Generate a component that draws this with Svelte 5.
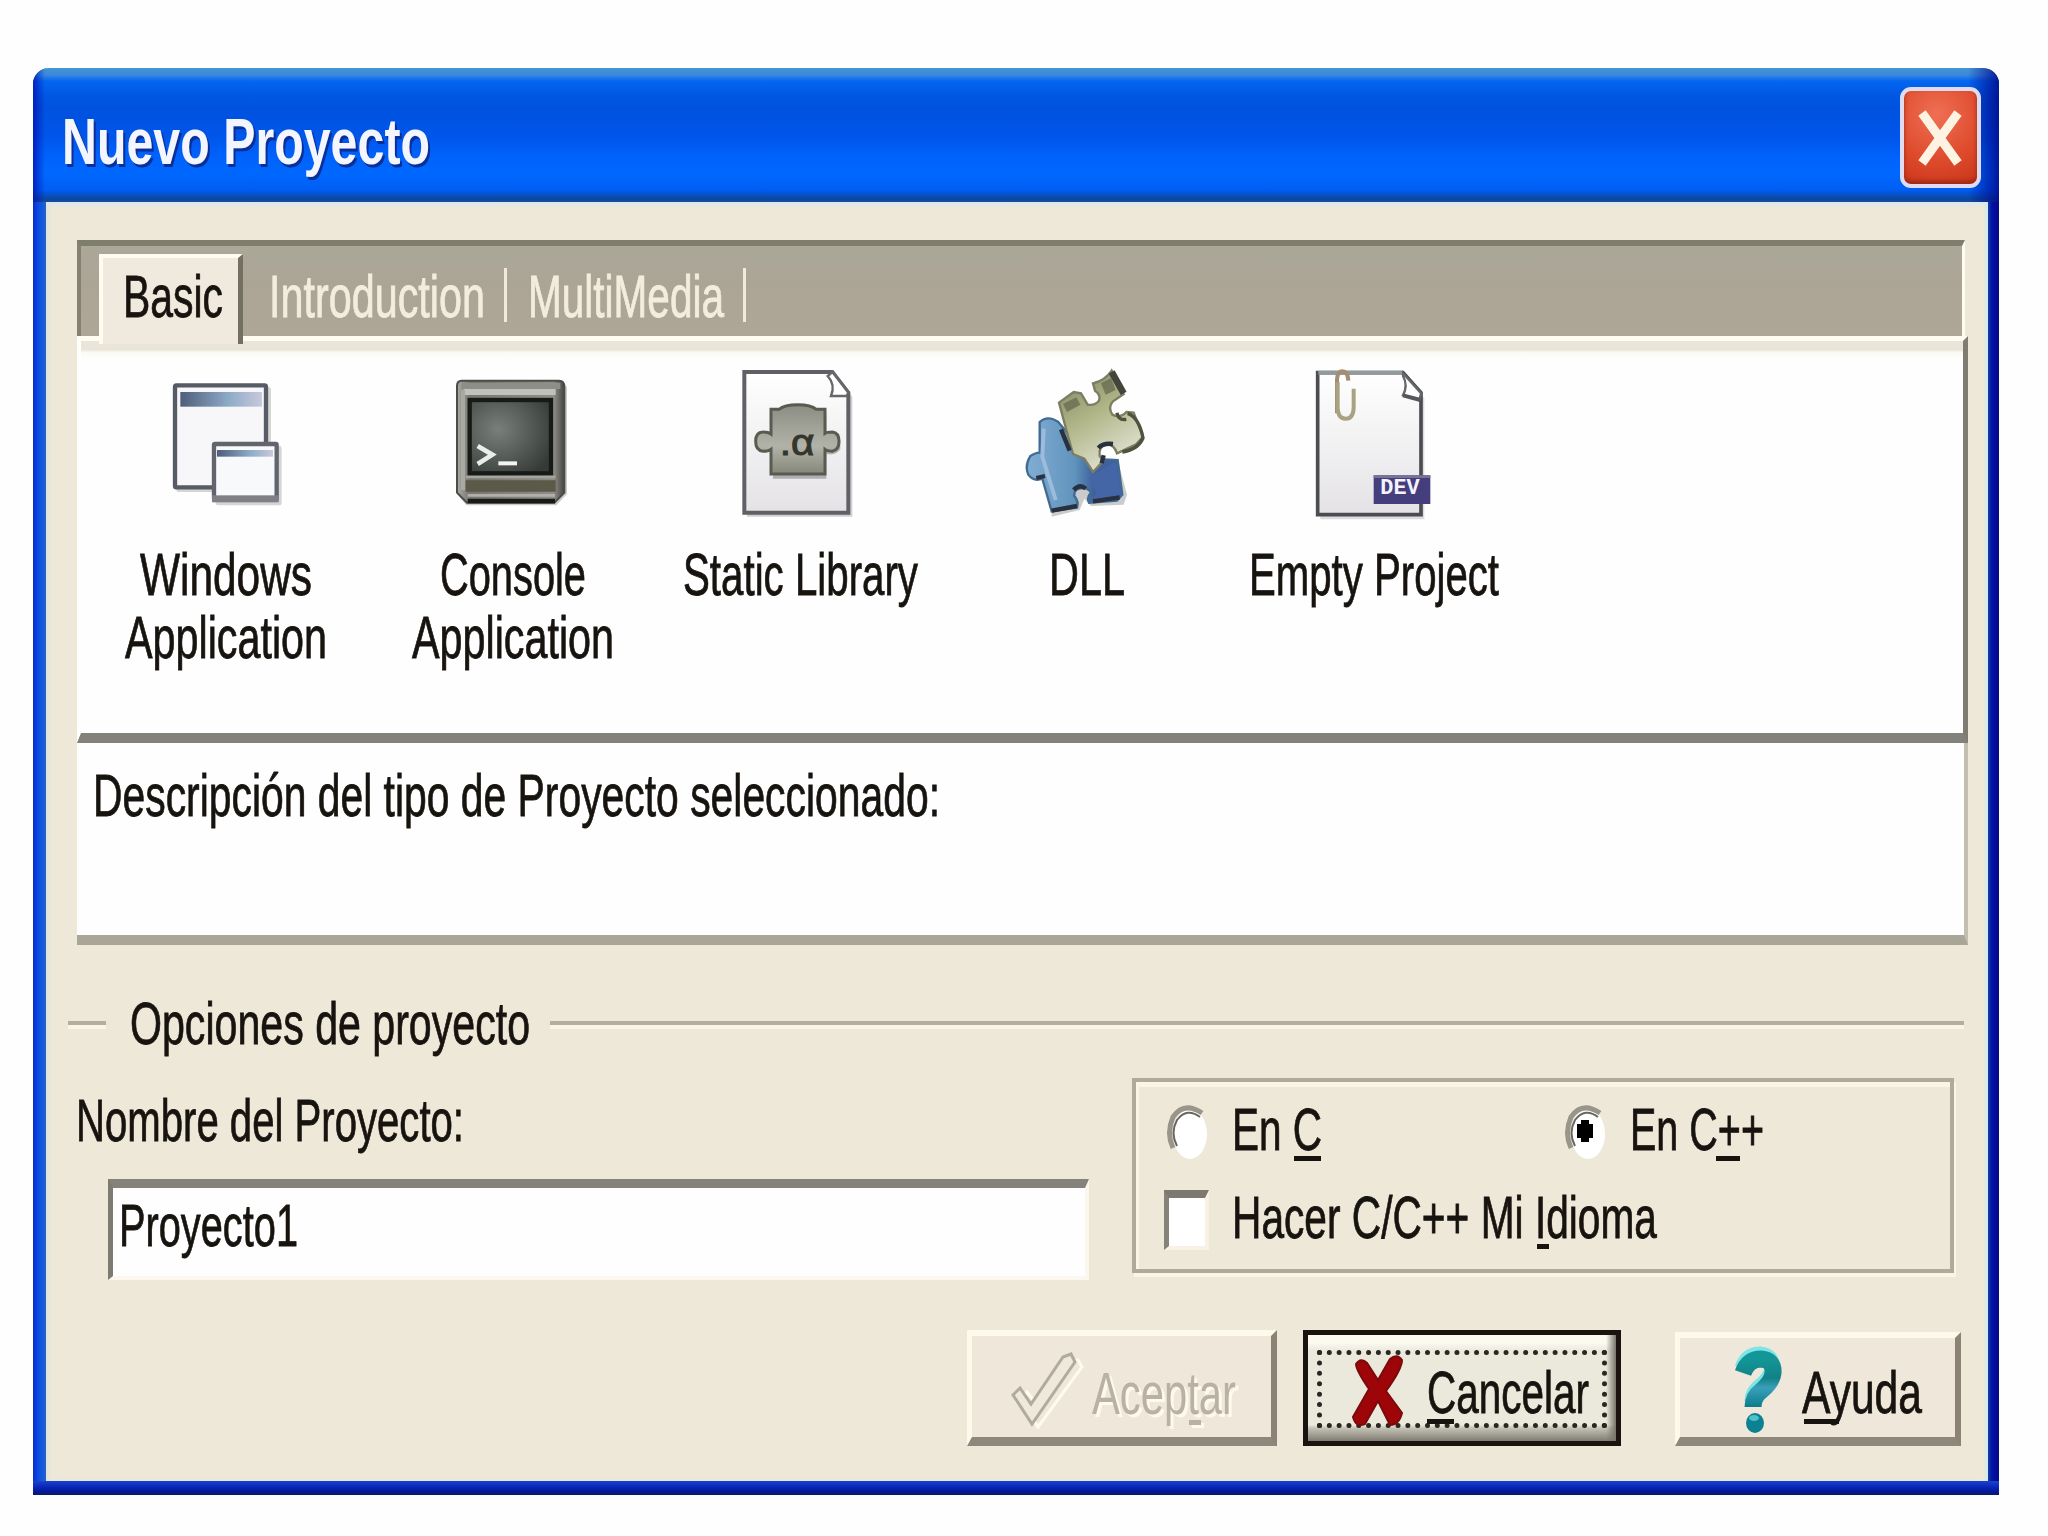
<script>
  const tabs = [
    { name: 'Introduction', width: 213 },
    { name: 'MultiMedia', width: 193 }
  ];

  const templates = [
    { icon: 'windows', box: '93 48 450 480', lines: [['Windows', 169], ['Application', 199]] },
    { icon: 'console', box: '954 48 450 480', lines: [['Console', 143], ['Application', 199]] },
    { icon: 'library', box: '195 48 450 480', lines: [['Static Library', 232]] },
    { icon: 'dll', box: '1056 48 450 480', lines: [['DLL', 73]] },
    { icon: 'empty', box: '297 48 450 480', lines: [['Empty Project', 247]] }
  ];

  let language = 'cpp';
  let makeDefault = false;
</script>

<!-- Condensed label: the text is squeezed to a fixed width, key is [x, width] of the access key line -->
{#snippet label(text, width, key)}
  <svg class="label" {width} height="60" viewBox="0 0 {width} 60">
    <text x="-2" y="46" textLength={width + 3} lengthAdjust="spacingAndGlyphs">{text}</text>
    {#if key}
      <rect x={key[0]} y="52" width={key[1]} height="5" />
    {/if}
  </svg>
{/snippet}

{#snippet picture(name)}
  {#if name === 'windows'}
    <rect x="166" y="112" width="284" height="314" rx="6" fill="#000" opacity=".16" />
    <rect x="162" y="106" width="273" height="306" rx="4" fill="#f7f6f8" stroke="#565b66" stroke-width="13" />
    <rect x="178" y="126" width="245" height="44" fill="url(#caption)" />
    <rect x="284" y="288" width="198" height="178" rx="6" fill="#000" opacity=".16" />
    <rect x="279" y="282" width="188" height="166" rx="3" fill="#f8f9fb" stroke="#62656e" stroke-width="13" />
    <rect x="273" y="436" width="200" height="21" fill="#807f86" />
    <rect x="288" y="300" width="168" height="20" fill="url(#caption)" />
  {:else if name === 'console'}
    <path d="M1022 106h308q8 0 8 10v316l-32 34h-270l-28-34z" fill="#000" opacity=".2" />
    <path d="M1022 92h292q16 0 16 18v318l-30 30h-262l-30-30V108q0-16 14-16z" fill="url(#shell)" stroke="#4b4c47" stroke-width="6" />
    <path d="M1022 108h296" fill="none" stroke="#8d8e88" stroke-width="18" />
    <path d="M1028 126h276" fill="none" stroke="#c0c0bc" stroke-width="18" />
    <path d="M1026 120v300" fill="none" stroke="#a9a9a3" stroke-width="12" />
    <rect x="1046" y="150" width="244" height="220" fill="url(#screen)" stroke="#171b18" stroke-width="13" />
    <path d="M1034 381h270" stroke="#a6a59d" stroke-width="8" />
    <path d="M1034 408h270" stroke="#5b5948" stroke-width="34" />
    <path d="M1040 436h262" stroke="#b0afa9" stroke-width="8" />
    <path d="M1040 453h262" stroke="#191a17" stroke-width="13" />
    <path d="M1070 288l44 26-44 28" fill="none" stroke="#e9eeea" stroke-width="14" />
    <path d="M1132 340h56" stroke="#f2f5f2" stroke-width="12" />
  {:else if name === 'library'}
    <path d="M258 74h258l58 66v360H258z" fill="#000" opacity=".18" />
    <path d="M250 66h264l48 62v360H250z" fill="url(#paper)" stroke="#606066" stroke-width="12" />
    <path d="M514 66l48 62-6 10h-46q14-34-10-60z" fill="#fff" stroke="#66666b" stroke-width="7" />
    <path d="M336 190h160v66q30-8 42 18v24q-12 20-42 14v74H336z" fill="#000" opacity=".25" />
    <path d="M330 178h24q16-14 56-14t56 14h26v72q6-4 22-4 20 2 20 28t-20 30q-14 0-22-6v74H330v-74q-8 6-24 6-22-2-22-30t22-28q16 0 24 6z" fill="url(#block)" stroke="#595b50" stroke-width="9" />
    <text class="ext" x="356" y="314" textLength="104" lengthAdjust="spacingAndGlyphs">.α</text>
  {:else if name === 'dll'}
    <path d="M1172 500l84-20 14-34 20 22 98-4 10-30-24-90h-200z" fill="#000" opacity=".2" />
    <path d="M1136 216q24-22 56 0l92 110 86 4 14 104-16 18-84 6q-8-16 6-30-8-14-24-14-28 0-26 24 14 16 8 34l-76 12-28-98q-26 10-42-12-12-26 6-56 20-12 28-10z" fill="url(#blue)" stroke="#416b93" stroke-width="7" />
    <path d="M1286 382l78-48 18 100-14 18-72 4q0-16 10-28-10-18-20-46z" fill="#4465a6" />
    <path d="M1194 158l44-32 22 4 20 34q22 4 34-12 6-18-12-30l-6-22q36-8 56-38l36 70-32 22q-16 18-2 40 24 12 42-8l22 2 28 72-22 24-56 26q-10-30-34-26-22 6-18 34l12 14-32 34-26-40-34-14-20-72z" fill="url(#green)" stroke="#7c7e62" stroke-width="7" />
    <path d="M1352 66l36 64" fill="none" stroke="#43443b" stroke-width="20" />
    <path d="M1400 190q34 12 46 74-14 34-62 42M1368 188q4 24 28 20" fill="none" stroke="#51513f" stroke-width="10" />
    <path d="M1200 238l26 64M1312 294q14-16 44-12M1322 340l6-24M1238 420q18-20 36-4M1126 384l26-6M1172 482l76-14M1296 454l80-12" fill="none" stroke="#29313e" stroke-width="13" />
    <path d="M1148 236l-4 84 40 130" fill="none" stroke="#9bbcdb" stroke-width="12" />
    <path d="M1206 162l40-20 12 22-40 22zM1320 100l30-16 14 36-30 14z" fill="#62664b" opacity=".7" />
  {:else}
    <path d="M358 78h250l62 66v364H358z" fill="#000" opacity=".13" />
    <path d="M350 68h256l54 60v366H350z" fill="url(#paper)" stroke="#4c4d50" stroke-width="11" />
    <path d="M352 68h254" stroke="#929b9c" stroke-width="12" />
    <path d="M606 70l54 60-4 18-50-12q16-30 0-58z" fill="#fff" stroke="#66696a" stroke-width="7" />
    <path d="M606 136l52 14" stroke="#55585a" stroke-width="12" />
    <path d="M408 190V88q2-24 16-24 16 0 18 28" fill="none" stroke="#a58d73" stroke-width="12" />
    <path d="M410 96v80q2 30 24 30 24 0 24-36v-54" fill="none" stroke="#a9a281" stroke-width="12" />
    <rect x="518" y="376" width="170" height="86" fill="#443f7c" />
    <path d="M518 380h170" stroke="#777397" stroke-width="8" />
    <text class="dev" x="538" y="432" textLength="118" lengthAdjust="spacingAndGlyphs">DEV</text>
  {/if}
{/snippet}

<svg class="defs" aria-hidden="true">
  <defs>
    <linearGradient id="caption"><stop offset="0" stop-color="#4f5e7c" /><stop offset=".6" stop-color="#8eacc8" /><stop offset="1" stop-color="#c9c8dc" /></linearGradient>
    <linearGradient id="shell"><stop offset="0" stop-color="#aaa9a4" /><stop offset=".12" stop-color="#77766f" /><stop offset=".9" stop-color="#8e8d87" /><stop offset="1" stop-color="#464640" /></linearGradient>
    <radialGradient id="screen" cx=".35" cy=".4" r=".75"><stop offset="0" stop-color="#79807b" /><stop offset="1" stop-color="#353a37" /></radialGradient>
    <linearGradient id="paper" x2="0" y2="1"><stop offset="0" stop-color="#fff" /><stop offset="1" stop-color="#e4e2e5" /></linearGradient>
    <linearGradient id="block" x2="0" y2="1"><stop offset="0" stop-color="#8b8c83" /><stop offset=".6" stop-color="#b2b3a8" /><stop offset="1" stop-color="#84877a" /></linearGradient>
    <linearGradient id="blue"><stop offset="0" stop-color="#82add3" /><stop offset=".5" stop-color="#6094bd" /><stop offset=".7" stop-color="#3f619c" /></linearGradient>
    <linearGradient id="green" x2=".5" y2="1"><stop offset="0" stop-color="#7d8164" /><stop offset=".5" stop-color="#afb586" /><stop offset="1" stop-color="#dfe0cf" /></linearGradient>
    <linearGradient id="teal" x2="0" y2="1"><stop offset="0" stop-color="#139697" /><stop offset=".4" stop-color="#128187" /><stop offset=".6" stop-color="#3aa0ba" /><stop offset="1" stop-color="#0b7c8b" /></linearGradient>
  </defs>
</svg>

<main class="dialog">
  <header class="title-bar">
    <svg class="title" width="366" height="70" viewBox="0 0 366 70">
      <text x="-2" y="48" textLength="368" lengthAdjust="spacingAndGlyphs">Nuevo Proyecto</text>
    </svg>
    <button class="close" aria-label="Cerrar">
      <svg width="48" height="58" viewBox="0 0 48 58">
        <path d="M5 4l36 50M41 4L5 54" stroke="#fdf3e2" stroke-width="9" />
      </svg>
    </button>
  </header>

  <div class="client">
    <nav class="tabs">
      <div class="tab active">{@render label('Basic', 97)}</div>
      {#each tabs as tab}
        <div class="tab">{@render label(tab.name, tab.width)}</div>
      {/each}
    </nav>

    <section class="templates">
      {#each templates as item}
        <div class="template">
          <svg width="150" height="160" viewBox={item.box}>{@render picture(item.icon)}</svg>
          <div class="caption">
            {#each item.lines as line}
              {@render label(line[0], line[1])}
            {/each}
          </div>
        </div>
      {/each}
    </section>

    <section class="description">
      {@render label('Descripción del tipo de Proyecto seleccionado:', 844)}
    </section>

    <div class="legend">{@render label('Opciones de proyecto', 397)}</div>

    <section class="options">
      <div class="name">
        {@render label('Nombre del Proyecto:', 385)}
        <div class="field">{@render label('Proyecto1', 176)}</div>
      </div>

      <div class="group">
        <div class="radios">
          <div class="choice">
            <svg class="radio" width="44" height="60" viewBox="0 0 44 60">
              <ellipse cx="24" cy="32" rx="17" ry="25" fill="#fff" />
              <path d="M7 46Q0 31 7 15 18-1 36 11" fill="none" stroke="#99958a" stroke-width="5" />
              <path d="M11 44Q4 31 11 18 21 5 34 15" fill="none" stroke="#69665d" stroke-width="2" />
              {#if language === 'c'}<path d="M18 19h8v4h4v14h-4v4h-8v-4h-4V23h4z" />{/if}
            </svg>
            {@render label('En C', 87, [60, 27])}
          </div>
          <div class="choice">
            <svg class="radio" width="44" height="60" viewBox="0 0 44 60">
              <ellipse cx="24" cy="32" rx="17" ry="25" fill="#fff" />
              <path d="M7 46Q0 31 7 15 18-1 36 11" fill="none" stroke="#99958a" stroke-width="5" />
              <path d="M11 44Q4 31 11 18 21 5 34 15" fill="none" stroke="#69665d" stroke-width="2" />
              {#if language === 'cpp'}<path d="M17 18h8v4h4v14h-4v4h-8v-4h-4V22h4z" />{/if}
            </svg>
            {@render label('En C++', 131, [84, 24])}
          </div>
        </div>
        <div class="choice check-row">
          <span class="checkbox" role="checkbox" aria-checked={makeDefault} aria-label="Idioma" tabindex="0"></span>
          {@render label('Hacer C/C++ Mi Idioma', 422, [303, 12])}
        </div>
      </div>
    </section>

    <footer class="buttons">
      <button class="button accept" disabled>
        <svg width="68" height="76" viewBox="0 0 68 76">
          <path d="M5 45l6-8 12 15L53 6l9-1 4 7-44 60z" transform="translate(3 3)" fill="none" stroke="#fffaf0" stroke-width="3" />
          <path d="M0 43l7-7 11 16L50 5l8-3 4 8-43 62z" fill="#efe9db" stroke="#b1aa9e" stroke-width="3" />
        </svg>
        {@render label('Aceptar', 141, [95, 12])}
      </button>
      <button class="button cancel">
        <span class="focus">
          <svg width="52" height="72" viewBox="0 0 52 72">
            <path d="M4 9q5-7 11-1l11 17L38 4q7-6 12 1 0 9-16 31l16 22q-3 12-12 12L26 46 13 69q-9 4-12-7l16-28Q4 15 4 9z" fill="#9d0509" stroke="#7d0a0b" stroke-width="2" />
          </svg>
          {@render label('Cancelar', 159, [-2, 27])}
        </span>
      </button>
      <button class="button help">
        <svg width="50" height="92" viewBox="0 0 50 92">
          <path d="M9 29q5-14 18-14 13 1 12 14-1 9-12 18-8 6-8 15" transform="translate(-1 -5)" fill="none" stroke="#7de5e5" stroke-width="15" />
          <path d="M9 29q5-14 18-14 13 1 12 14-1 9-12 18-8 6-8 16" fill="none" stroke="url(#teal)" stroke-width="17" />
          <ellipse cx="21" cy="79" rx="9" ry="10" fill="#0b8191" />
          <ellipse cx="20" cy="74" rx="5" ry="3" fill="#4fc0cc" />
        </svg>
        {@render label('Ayuda', 117, [0, 35])}
      </button>
    </footer>
  </div>
</main>

<style>
  :global(body) {
    background: #fefefe;
    overflow: hidden;
  }

  .defs {
    position: absolute;
    width: 0;
    height: 0;
  }

  svg {
    display: block;
    flex: none;
    overflow: visible;
  }

  .dialog {
    box-sizing: border-box;
    width: 1966px;
    height: 1427px;
    margin: 68px 0 0 33px;
    display: flex;
    flex-direction: column;
    font-family: 'Liberation Sans', Arial, sans-serif;
    background:
      linear-gradient(#1c42cc, #0a26b8 6px, #041a9c 10px, #0a1a66) bottom / 100% 14px no-repeat,
      linear-gradient(90deg, #0a2cc8, #0a4fe6 6px, #2464c8 13px, transparent 13px) left / 13px 100% no-repeat,
      linear-gradient(90deg, #1040a0, #0410a8 4px, #020a86) right / 11px 100% no-repeat;
    border-radius: 16px 16px 0 0;
  }

  .title-bar {
    box-sizing: border-box;
    height: 134px;
    padding: 19px 18px 0 31px;
    display: flex;
    align-items: flex-start;
    justify-content: space-between;
    border-radius: 16px 16px 0 0;
    background:
      linear-gradient(90deg, rgba(0, 20, 180, 0.8), transparent 12px, transparent 1935px, rgba(0, 10, 140, 0.85)),
      linear-gradient(#4695cf, #3a88de 7px, #0366f2 13px, #0058e2 27px, #0052de 40px, #0055ea 68px, #0062fb 88px, #0068ff 106px, #005df3 122px, #0a479f 131px, #1b4d97);
  }

  .title {
    margin-top: 29px;
    font-size: 64px;
    font-weight: bold;
    fill: #f3f5ff;
    filter: drop-shadow(2px 3px 0 #0a2f98);
  }

  .close {
    box-sizing: border-box;
    width: 81px;
    height: 101px;
    padding: 0;
    display: grid;
    place-items: center;
    border: 4px solid #dfdcf1;
    border-radius: 11px;
    background: radial-gradient(circle at 45% 25%, #ef6f55, #df4c2d 55%, #c8341a);
    box-shadow: inset 0 -3px 4px #9c2815;
  }

  .client {
    box-sizing: border-box;
    width: 1942px;
    height: 1279px;
    margin-left: 13px;
    padding: 38px 20px 0 31px;
    background: #eee8d9;
    box-shadow: inset 0 5px 4px -2px #d9e8f0, inset -4px 0 3px -1px #d4e9ef, inset 3px 0 3px #dfe5dc;
  }

  .label {
    font-size: 60px;
    fill: #17130f;
    stroke: #17130f;
    stroke-width: 0.8px;
  }

  .label rect {
    stroke: none;
  }

  .ext {
    font-size: 112px;
    fill: #34362b;
    stroke: #34362b;
    stroke-width: 3px;
  }

  .dev {
    font-family: 'Liberation Mono', monospace;
    font-size: 64px;
    font-weight: bold;
    fill: #f4f2ff;
  }

  .tabs {
    box-sizing: border-box;
    width: 1888px;
    height: 96px;
    display: flex;
    padding-left: 18px;
    border-top: 6px solid #7f7d6c;
    border-left: 4px solid #858170;
    border-right: 3px solid #fffcf0;
    background: linear-gradient(#aaa899, #aca596 40%, #aea797);
  }

  .tab {
    box-sizing: border-box;
    height: 54px;
    display: flex;
    margin-top: 22px;
    padding: 0 20px 0 23px;
    border-right: 3px solid #f0eadb;
  }

  .tab .label {
    margin-top: 3px;
    fill: #f3edde;
    stroke: #f3edde;
  }

  .tab.active {
    height: 90px;
    margin: 8px 5px 0 0;
    padding: 0 16px 0 22px;
    border-top: 4px solid #fffcef;
    border-left: 4px solid #fffcef;
    border-right: 5px solid #736f61;
    background: #f0e9dd;
    z-index: 1;
  }

  .tab.active .label {
    margin-top: 13px;
    fill: #17130f;
    stroke: #17130f;
  }

  .templates {
    box-sizing: border-box;
    width: 1891px;
    height: 407px;
    padding: 25px 0 0 2px;
    display: grid;
    grid-template-columns: repeat(5, 287px);
    border-top: 5px solid #fffcf0;
    border-left: 4px solid #fff;
    border-right: 5px solid #7f7d72;
    border-bottom: 10px solid #82817a;
    background: linear-gradient(#e9e6d9 9px, #fbf9f2 11px, #fefefe 18px);
  }

  .template {
    display: flex;
    flex-direction: column;
    align-items: center;
  }

  .caption {
    margin-top: 23px;
    display: flex;
    flex-direction: column;
    align-items: center;
    gap: 3px;
  }

  .description {
    box-sizing: border-box;
    width: 1891px;
    height: 202px;
    padding: 27px 0 0 18px;
    border-right: 4px solid #c2beb0;
    border-bottom: 10px solid #aaa697;
    background: #fefefe;
  }

  .legend {
    height: 60px;
    margin: 53px 0 0 -9px;
    display: flex;
    align-items: center;
    width: 1896px;
  }

  .legend::before,
  .legend::after {
    content: '';
    height: 4px;
    margin-top: -7px;
    background: #b5aea0;
    border-bottom: 4px solid #fbf5e7;
  }

  .legend::before {
    width: 38px;
    margin-right: 26px;
  }

  .legend::after {
    flex: 1;
    margin-left: 21px;
  }

  .options {
    height: 200px;
    margin-top: 20px;
    display: flex;
    align-items: flex-start;
  }

  .name {
    width: 1055px;
    padding-top: 17px;
  }

  .name > .label {
    margin-left: 1px;
  }

  .field {
    box-sizing: border-box;
    width: 981px;
    height: 101px;
    margin: 24px 0 0 31px;
    padding: 12px 0 0 8px;
    border-top: 9px solid #85827a;
    border-left: 5px solid #7d7a6f;
    border-right: 4px solid #fcf7ec;
    border-bottom: 4px solid #fcf7ef;
    background: #fefefe;
  }

  .group {
    box-sizing: border-box;
    width: 822px;
    height: 195px;
    padding: 20px 0 0 30px;
    border: 4px solid #aeaa9c;
    box-shadow: inset 3px 5px #fbf5e7, 2px 4px #fbf5e7;
  }

  .radios {
    display: grid;
    grid-template-columns: 398px 1fr;
  }

  .choice {
    display: flex;
    align-items: flex-start;
  }

  .radio {
    margin-right: 24px;
  }

  .choice .label {
    margin-top: 2px;
  }

  .check-row {
    margin-top: 26px;
  }

  .checkbox {
    box-sizing: border-box;
    width: 45px;
    height: 60px;
    margin: 0 25px 0 -2px;
    border-top: 8px solid #7d796f;
    border-left: 5px solid #85827a;
    border-right: 4px solid #f7f1e6;
    border-bottom: 4px solid #f7f1e6;
    background: #fff;
  }

  .buttons {
    margin-top: 52px;
    display: flex;
    padding-left: 890px;
  }

  .button {
    box-sizing: border-box;
    height: 116px;
    padding: 0;
    display: flex;
    align-items: flex-start;
    background: #efe8da;
    border-style: solid;
    border-width: 6px 6px 9px 5px;
    border-color: #fff9eb #8c8376 #8f877b #fff9eb;
  }

  .accept {
    width: 310px;
    padding: 16px 0 0 41px;
    gap: 13px;
  }

  .accept .label {
    margin-top: 16px;
    fill: #b9b1a4;
    stroke: none;
    filter: drop-shadow(3px 3px 0 #fff9ec);
  }

  .cancel {
    width: 318px;
    margin-left: 26px;
    padding: 11px 0 0 9px;
    border: 5px solid #1b1310;
    background:
      linear-gradient(90deg, transparent, #77756b) right / 10px 100% no-repeat,
      linear-gradient(transparent, #c5c3b6 3px, #7f7d72) bottom / 100% 16px no-repeat,
      linear-gradient(#fbf9f0 8px, #eae9dc 16px);
  }

  .focus {
    box-sizing: border-box;
    width: 290px;
    height: 78px;
    padding: 0 0 0 30px;
    display: flex;
    align-items: flex-start;
    gap: 25px;
    border: 5px dotted #2b2621;
    margin-top: 4px;
  }

  .focus .label {
    margin-top: 12px;
  }

  .help {
    width: 286px;
    height: 114px;
    margin: 2px 0 0 54px;
    padding: 6px 0 0 54px;
    gap: 20px;
  }

  .help .label {
    margin-top: 23px;
  }
</style>
